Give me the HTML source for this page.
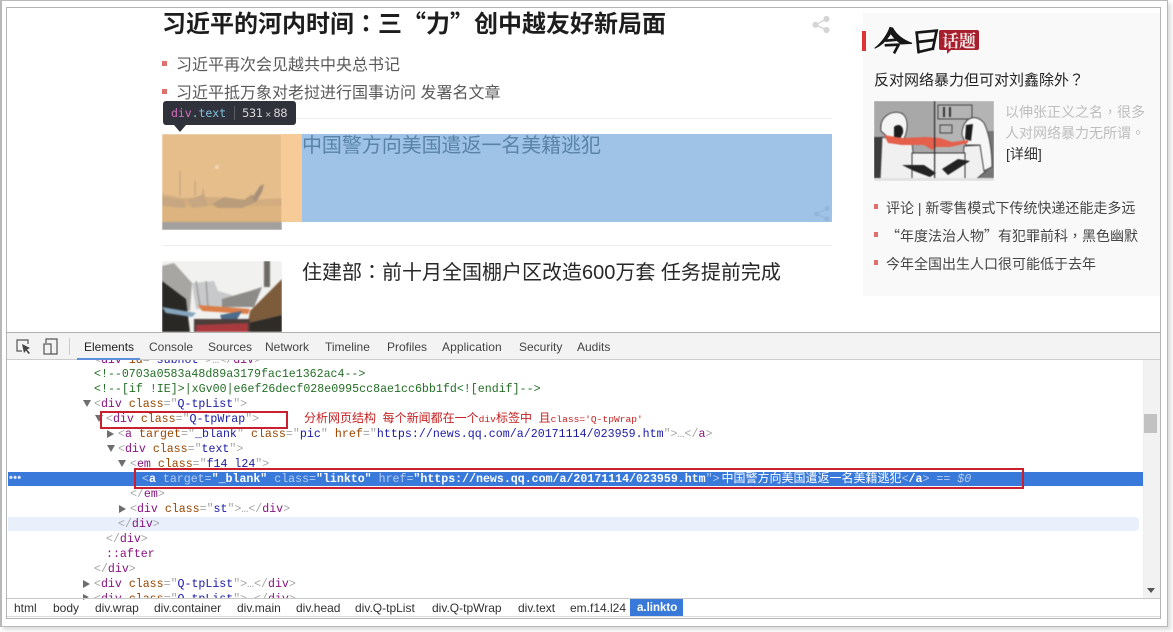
<!DOCTYPE html>
<html><head><meta charset="utf-8"><style>
*{margin:0;padding:0;box-sizing:border-box}
html,body{width:1173px;height:632px;overflow:hidden;background:#fff}
body{position:relative;font-family:"Liberation Sans","Noto Sans CJK SC",sans-serif}
.a{position:absolute;white-space:nowrap}
.p{font-family:"Noto Sans CJK TC",sans-serif}
.dot{position:absolute;width:5px;height:5px;background:#e0706c}
.r{position:absolute;left:8px;width:1135px;height:15px;font:11.6px/15px "Liberation Mono","Noto Sans CJK SC",monospace;white-space:pre;color:#a5a5a5}
.t{color:#881280}.n{color:#994500}.v{color:#1a1aa6}
.tri{position:absolute;width:0;height:0;border-left:7px solid #6e6e6e;border-top:4px solid transparent;border-bottom:4px solid transparent}
.tri.d{border-top:7px solid #6e6e6e;border-left:4px solid transparent;border-right:4px solid transparent;border-bottom:0}
.tab{position:absolute;top:340px;font-size:12px;line-height:14px;color:#444;white-space:nowrap}
.cr{position:absolute;top:601px;font-size:12px;line-height:14px;color:#303030;white-space:nowrap}
.w{color:#fff;font-weight:bold}.lw{color:#b9cdee}
</style></head><body>
<div class="a" style="left:0;top:0;width:1168px;height:627px;border:2px solid #b8b8b8;border-width:1px 1px 1px 2px;box-shadow:3px 3px 4px #ddd"></div>
<div class="a" style="left:6px;top:7px;width:1155px;height:612px;border:1px solid #b4b4b4;background:#fff"></div>

<div class="a" style="left:162px;top:5px;font-size:24px;line-height:34px;font-weight:bold;color:#1d1d1d;letter-spacing:0">习近平的河内时间<span class="p">：</span>三<span class="p">“</span>力<span class="p">”</span>创中越友好新局面</div>
<svg class="a" style="left:812px;top:16px" width="18" height="18" viewBox="0 0 18 18"><g fill="#d5d5d5" stroke="#d5d5d5" stroke-width="1.4"><circle cx="14.5" cy="3" r="2.4"/><circle cx="3.5" cy="8.8" r="2.4"/><circle cx="14.5" cy="14" r="2.4"/><path d="M14.5 3 3.5 8.8 14.5 14" fill="none"/></g></svg>
<div class="dot" style="left:162px;top:61px"></div>
<div class="a" style="left:176px;top:55px;font-size:16px;line-height:22px;color:#5a5a5a">习近平再次会见越共中央总书记</div>
<div class="dot" style="left:162px;top:89px"></div>
<div class="a" style="left:176px;top:83px;font-size:16px;line-height:22px;color:#5a5a5a">习近平抵万象对老挝进行国事访问 发署名文章</div>
<div class="a" style="left:162px;top:118px;width:670px;height:1px;background:#eee"></div>
<div class="a" style="left:162px;top:245px;width:670px;height:1px;background:#eee"></div>

<div class="a" style="left:162px;top:134px;width:120px;height:96px;overflow:hidden">
<svg style="display:block;filter:blur(.7px)" width="120" height="96" viewBox="0 0 120 96">
<rect width="120" height="96" fill="#e6be8c"/><rect y="68" width="120" height="20" fill="#ddb47f"/>
<path d="M0 60 20 64 50 63 90 66 120 64V72H0Z" fill="#d3ad7f"/>
<path d="M0 63 22 66 24 74 0 72ZM26 66 42 60 46 72 30 74Z" fill="#c6a781"/>
<path d="M50 70 62 63 82 66 90 60 94 68 80 74 56 74Z" fill="#b89c7b"/><path d="M90 64 98 52 102 50 100 58 94 68Z" fill="#a88f78"/>
<circle cx="55" cy="33" r="2" fill="#f0d6b2"/>
<path d="M18 37V62M33 47V62M41 55V62" stroke="#b99d79" stroke-width="1"/><rect y="88" width="120" height="8" fill="#a2a09e"/></svg></div>
<div class="a" style="left:282px;top:134px;width:20px;height:88px;background:#f7cb98"></div>
<div class="a" style="left:302px;top:134px;width:530px;height:88px;background:#9fc3e7"></div>
<div class="a" style="left:302px;top:132px;font-size:20px;line-height:28px;color:#5a83a8;letter-spacing:-.07px">中国警方向美国遣返一名美籍逃犯</div>
<svg class="a" style="left:813px;top:206px" width="18" height="16" viewBox="0 0 18 16"><g fill="#92b6d8" stroke="#92b6d8"><circle cx="14" cy="2.5" r="2"/><circle cx="3.5" cy="8" r="2"/><circle cx="14" cy="13" r="2"/><path d="M14 2.5 3.5 8 14 13" fill="none"/></g></svg>

<div class="a" style="left:163px;top:101px;width:133px;height:24px;background:#2f323b;border-radius:3px"></div>
<div class="a" style="left:174px;top:125px;width:0;height:0;border-left:6px solid transparent;border-right:6px solid transparent;border-top:7px solid #2f323b"></div>
<div class="a" style="left:171px;top:106px;font:11.5px/14px 'DejaVu Sans Mono','Liberation Mono',monospace;color:#d6d6d6;letter-spacing:-.05px"><span style="color:#d46fc2">div</span><span style="color:#7fc4dc">.text</span></div>
<div class="a" style="left:234px;top:106px;width:1px;height:14px;background:#5a5d66"></div>
<div class="a" style="left:242px;top:106px;font:11.5px/14px 'DejaVu Sans','Liberation Sans',sans-serif;color:#d8d8d8;letter-spacing:-.4px">531<span style="font-size:8px"> × </span>88</div>

<div class="a" style="left:162px;top:261px;width:120px;height:71px;overflow:hidden">
<svg style="display:block;filter:blur(.8px)" width="120" height="71" viewBox="0 0 120 71">
<rect width="120" height="71" fill="#f1f1ef"/>
<path d="M0 5 12 2 30 22 28 50 0 45Z" fill="#a8a6a2"/><path d="M0 20 24 38 28 71H0Z" fill="#2a2825"/>
<path d="M30 22 52 20 56 30 70 34 75 46 34 48Z" fill="#c8c9ca"/><path d="M34 20 38 45M44 20 46 46" stroke="#888" stroke-width="1"/>
<path d="M60 38 88 30 100 26 92 46 60 46Z" fill="#8d8b88"/><path d="M0 46 34 52 30 56 4 52Z" fill="#84a5bc"/>
<path d="M102 0h6v26h-6z" fill="#6d6964"/><path d="M120 18 88 50 86 62 120 54Z" fill="#7d5c3c"/><path d="M86 62 120 54V71H86Z" fill="#2f2b27"/>
<path d="M36 44 88 48 86 53 40 50Z" fill="#db7d47"/><path d="M58 54 80 50 74 60 60 60Z" fill="#4b6c8b"/>
<rect x="32" y="58" width="56" height="13" fill="#4c3d3b"/><path d="M34 64 86 62V71H34Z" fill="#a83a3e"/></svg></div>
<div class="a" style="left:302px;top:257px;font-size:20px;line-height:28px;color:#272727">住建部<span class="p">：</span>前十月全国棚户区改造600万套 任务提前完成</div>

<div class="a" style="left:863px;top:13px;width:297px;height:283px;background:#f9f9f9"></div>
<div class="a" style="left:862px;top:31px;width:4px;height:20px;background:#e03434"></div>
<svg class="a" style="left:874px;top:25px" width="66" height="30" viewBox="18 15 198 90"><path d="M20 85C40 70 58 45 66 22L74 24C85 45 105 60 132 70L100 72C85 62 75 50 68 40 58 58 42 75 20 85Z" fill="#161616" stroke="#161616" stroke-width="3"/><g fill="none" stroke="#161616" stroke-width="8"><path d="M52 62 100 58"/><path d="M50 76 92 74 78 100"/><path d="M146 36 152 100"/><path d="M142 38 206 32 194 90"/><path d="M150 66 198 60"/><path d="M152 96 194 86"/></g></svg>
<div class="a" style="left:939px;top:30px;width:40px;height:20px;background:#a71f2c;border-radius:2px"></div>
<div class="a" style="left:947px;top:50px;width:0;height:0;border-top:4px solid #a71f2c;border-right:4px solid transparent"></div>
<div class="a" style="left:942px;top:31px;font:bold 17px/17px 'Noto Serif CJK SC','Noto Sans CJK SC',serif;color:#f6e7e7">话题</div>
<div class="a" style="left:874px;top:69px;font-size:15px;line-height:21px;color:#222">反对网络暴力但可对刘鑫除外<span class="p">？</span></div>

<div class="a" style="left:874px;top:101px;width:120px;height:80px;overflow:hidden">
<svg style="display:block;filter:blur(.4px)" width="120" height="80" viewBox="0 0 120 80">
<rect width="120" height="80" fill="#a8a8a8"/><path d="M60 0h60v80H60z" fill="#b4b4b4"/>
<rect x="0" y="36" width="9" height="44" fill="#3d3d3d"/><path d="M100 30h20v50h-20z" fill="#777"/>
<path d="M64 4h34v14H64zM66 24h12v8H66z" fill="none" stroke="#444"/><path d="M70 6v10M76 6v10" stroke="#333" stroke-width="2"/>
<path d="M8 36 38 42 42 80H6Z" fill="#f0f0f0" stroke="#444"/><path d="M7 30C5 15 18 9 27 12 36 16 34 34 28 40L18 40Z" fill="#f4f4f4" stroke="#444"/><path d="M20 26C24 22 30 24 29 32L26 38 20 36Z" fill="#1d1d1d"/>
<path d="M90 45 110 44 112 70 100 80 88 80Z" fill="#f0f0f0" stroke="#444"/><path d="M88 34C88 16 102 12 110 22 116 34 118 52 118 66L110 70 106 44 92 44Z" fill="#f6f6f6" stroke="#444"/><path d="M92 24 99 23 97 40 91 38Z" fill="#1d1d1d"/>
<path d="M10 34 28 37 52 36 66 37 78 41 94 39 94 42 76 46 62 46 58 49 50 44 28 44 14 42Z" fill="#e5604c"/>
<rect x="38" y="52" width="53" height="28" fill="#f2f2f2" stroke="#333"/><path d="M28 64 50 64 62 72 56 76 40 70ZM68 68 84 58 96 60 74 74Z" fill="#232323"/><rect x="60" y="0" width="1.2" height="80" fill="#2b2b2b"/><rect x="0" y="77" width="120" height="3" fill="#e2e2e2"/></svg></div>
<div class="a" style="left:1005px;top:102px;font-size:14px;line-height:21px;color:#bdbdbd">以伸张正义之名<span class="p">，</span>很多<br>人对网络暴力无所谓<span class="p">。</span><br><span style="color:#333;margin-left:1px">[详细]</span></div>
<div class="dot" style="left:874px;top:204px;width:4px"></div>
<div class="a" style="left:886px;top:198px;font-size:14px;line-height:20px;color:#454545">评论 | 新零售模式下传统快递还能走多远</div>
<div class="dot" style="left:874px;top:232px;width:4px"></div>
<div class="a" style="left:886px;top:226px;font-size:14px;line-height:20px;color:#454545"><span class="p">“</span>年度法治人物<span class="p">”</span>有犯罪前科<span class="p">，</span>黑色幽默</div>
<div class="dot" style="left:874px;top:260px;width:4px"></div>
<div class="a" style="left:886px;top:254px;font-size:14px;line-height:20px;color:#454545">今年全国出生人口很可能低于去年</div>

<div class="a" style="left:7px;top:332px;width:1153px;height:286px;background:#fff;border-top:1px solid #b0b0b0"></div>
<div class="a" style="left:7px;top:333px;width:1153px;height:27px;background:#f3f3f3;border-bottom:1px solid #ccc"></div>
<svg class="a" style="left:15px;top:338px" width="46" height="18" viewBox="0 0 46 18"><path d="M7 13H2V2H13V6" fill="none" stroke="#555" stroke-width="1.2"/><path d="M7 6 15 10 12 11.5 15 15 13.5 16 11 12.5 9 15Z" fill="#444"/><path d="M31 5V1H42V16H36" fill="none" stroke="#555" stroke-width="1.2"/><rect x="29" y="6" width="7" height="10" fill="none" stroke="#555" stroke-width="1.2"/></svg>
<div class="a" style="left:69px;top:338px;width:1px;height:17px;background:#ccc"></div>
<div class="a" style="left:77px;top:358px;width:63px;height:2px;background:#5b8fdc"></div>
<div class="tab" style="left:84px;color:#222">Elements</div><div class="tab" style="left:149px">Console</div><div class="tab" style="left:208px">Sources</div><div class="tab" style="left:265px">Network</div><div class="tab" style="left:325px">Timeline</div><div class="tab" style="left:387px">Profiles</div><div class="tab" style="left:442px;letter-spacing:.1px">Application</div><div class="tab" style="left:519px">Security</div><div class="tab" style="left:577px">Audits</div>

<div class="a" style="left:8px;top:360px;width:1135px;height:7px;overflow:hidden"><div class="r" style="left:0;top:-7px;padding-left:86px">&lt;<span class="t">div</span> <span class="n">id</span>="<span class="v">subhot</span>"&gt;…&lt;/<span class="t">div</span>&gt;</div></div>
<div class="r" style="top:367px;padding-left:86px;color:#236e25">&lt;!--0703a0583a48d89a3179fac1e1362ac4--&gt;</div>
<div class="r" style="top:382px;padding-left:86px;color:#236e25;letter-spacing:.02px">&lt;!--[if !IE]&gt;|xGv00|e6ef26decf028e0995cc8ae1cc6bb1fd&lt;![endif]--&gt;</div>
<div class="tri d" style="left:83px;top:400px"></div>
<div class="r" style="top:397px;padding-left:86px">&lt;<span class="t">div</span> <span class="n">class</span>="<span class="v">Q-tpList</span>"&gt;</div>
<div class="tri d" style="left:95px;top:415px"></div>
<div class="r" style="top:412px;padding-left:98px">&lt;<span class="t">div</span> <span class="n">class</span>="<span class="v">Q-tpWrap</span>"&gt;</div>
<div class="tri" style="left:107px;top:430px"></div>
<div class="r" style="top:427px;padding-left:110px;letter-spacing:.035px">&lt;<span class="t">a</span> <span class="n">target</span>="<span class="v">_blank</span>" <span class="n">class</span>="<span class="v">pic</span>" <span class="n">href</span>="<span class="v">https://news.qq.com/a/20171114/023959.htm</span>"&gt;…&lt;/<span class="t">a</span>&gt;</div>
<div class="tri d" style="left:107px;top:445px"></div>
<div class="r" style="top:442px;padding-left:110px">&lt;<span class="t">div</span> <span class="n">class</span>="<span class="v">text</span>"&gt;</div>
<div class="tri d" style="left:118px;top:460px"></div>
<div class="r" style="top:457px;padding-left:122px">&lt;<span class="t">em</span> <span class="n">class</span>="<span class="v">f14 l24</span>"&gt;</div>
<div class="a" style="left:8px;top:472px;width:1135px;height:14px;background:#3879d9"></div>
<div class="a" style="left:9px;top:473px;font:bold 11px/11px 'Liberation Sans',sans-serif;color:#dfe8f7;letter-spacing:.3px">•••</div>
<div class="r lw" style="top:471px;padding-left:134px">&lt;<span class="w">a</span> target=<span class="w">"_blank"</span> class=<span class="w">"linkto"</span> href=<span class="w">"https://news.qq.com/a/20171114/023959.htm</span>"&gt;<span style="color:#fff;font-family:'Liberation Sans','Noto Sans CJK SC',sans-serif;font-size:12px;margin-left:2px">中国警方向美国遣返一名美籍逃犯</span>&lt;<span class="w">/a</span>&gt; == <i>$0</i></div>
<div class="r" style="top:487px;padding-left:122px">&lt;/<span class="t">em</span>&gt;</div>
<div class="tri" style="left:119px;top:505px"></div>
<div class="r" style="top:502px;padding-left:122px">&lt;<span class="t">div</span> <span class="n">class</span>="<span class="v">st</span>"&gt;…&lt;/<span class="t">div</span>&gt;</div>
<div class="a" style="left:8px;top:517px;width:1131px;height:14px;background:#e9f0fb;border-radius:0 4px 4px 0"></div>
<div class="r" style="top:517px;padding-left:110px">&lt;/<span class="t">div</span>&gt;</div>
<div class="r" style="top:532px;padding-left:98px">&lt;/<span class="t">div</span>&gt;</div>
<div class="r" style="top:547px;padding-left:98px"><span class="t">::after</span></div>
<div class="r" style="top:562px;padding-left:86px">&lt;/<span class="t">div</span>&gt;</div>
<div class="tri" style="left:83px;top:580px"></div>
<div class="r" style="top:577px;padding-left:86px">&lt;<span class="t">div</span> <span class="n">class</span>="<span class="v">Q-tpList</span>"&gt;…&lt;/<span class="t">div</span>&gt;</div>
<div class="a" style="left:8px;top:592px;width:1135px;height:6px;overflow:hidden"><div class="r" style="left:0;top:0;padding-left:86px">&lt;<span class="t">div</span> <span class="n">class</span>="<span class="v">Q-tpList</span>"&gt;…&lt;/<span class="t">div</span>&gt;</div></div>
<div class="tri" style="left:83px;top:594px;border-top-width:3px;border-bottom-width:3px;border-left-width:6px"></div>

<div class="a" style="left:1143px;top:360px;width:17px;height:238px;background:#f2f2f2;border-left:1px solid #eee"></div>
<div class="a" style="left:1144px;top:414px;width:13px;height:19px;background:#c2c2c2"></div>
<div class="a" style="left:1147px;top:588px;width:0;height:0;border-left:4px solid transparent;border-right:4px solid transparent;border-top:5px solid #555"></div>

<div class="a" style="left:7px;top:598px;width:1153px;height:1px;background:#c8c8c8"></div>
<div class="cr" style="left:14px">html</div><div class="cr" style="left:53px">body</div><div class="cr" style="left:95px">div.wrap</div><div class="cr" style="left:154px">div.container</div><div class="cr" style="left:237px">div.main</div><div class="cr" style="left:296px">div.head</div><div class="cr" style="left:355px">div.Q-tpList</div><div class="cr" style="left:432px">div.Q-tpWrap</div><div class="cr" style="left:518px">div.text</div><div class="cr" style="left:570px">em.f14.l24</div>
<div class="a" style="left:630px;top:599px;width:53px;height:18px;background:#3879d9"></div>
<div class="cr" style="left:637px;color:#fff;font-weight:bold;font-size:11.5px">a.linkto</div>
<div class="a" style="left:7px;top:616px;width:1153px;height:1px;background:#ddd"></div>

<div class="a" style="left:100px;top:411px;width:188px;height:18px;border:2px solid #c8202e"></div>
<div class="a" style="left:134px;top:468px;width:890px;height:21px;border:2px solid #c8202e"></div>
<div class="a" style="left:304px;top:411px;font:12px/15px 'Liberation Sans','Noto Sans CJK SC',sans-serif;color:#c62020">分析网页结构&nbsp; 每个新闻都在一个<span style="font:9.6px 'Liberation Mono',monospace">div</span>标签中&nbsp; 且<span style="font:9.6px 'Liberation Mono',monospace">class='Q-tpWrap'</span></div>
</body></html>
